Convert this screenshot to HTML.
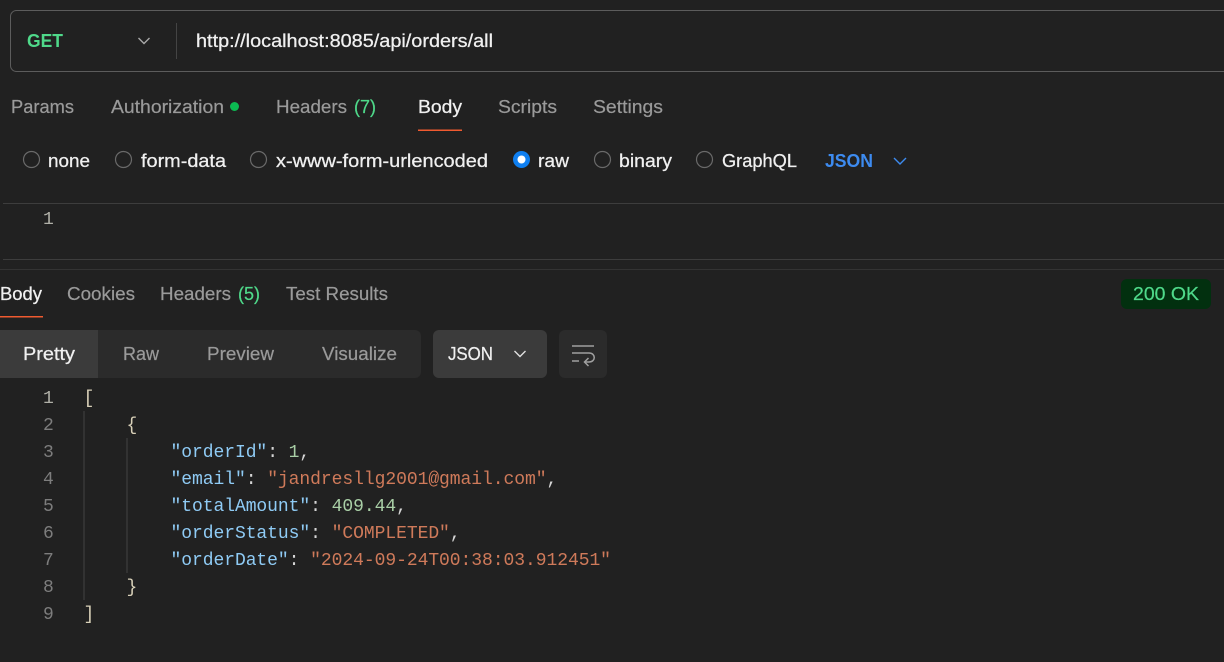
<!DOCTYPE html>
<html><head><meta charset="utf-8"><style>
html,body{margin:0;padding:0;background:#212121;width:1224px;height:662px;overflow:hidden}
svg{display:block}
text{font-family:"Liberation Sans",sans-serif;font-size:18px;white-space:pre}
.g{fill:#9a9a9a;stroke:#9a9a9a;stroke-width:.2}.w{fill:#f0f0f0;stroke:#f0f0f0;stroke-width:.25}.gr{fill:#4fd98a;stroke:#4fd98a;stroke-width:.2}
.m{font-family:"Liberation Mono",monospace;font-size:18px;letter-spacing:-.06px}
.n{fill:#7d7d7d}.l{fill:#b0b0a8}.k{fill:#8fcbf5}.s{fill:#cf7a5a}.d{fill:#a9cfa6}.p{fill:#d6d6d6}.b{fill:#d8d0b8}
</style></head><body>
<svg width="1224" height="662" viewBox="0 0 1224 662" xmlns="http://www.w3.org/2000/svg">
<rect width="1224" height="662" fill="#212121"/>
<rect x="10.5" y="10.5" width="1240" height="61" rx="6" fill="none" stroke="#5c5c5c"/>
<rect x="176" y="23" width="1" height="36" fill="#444"/>
<text x="27" y="47" font-weight="bold" class="gr" style="stroke-width:0" textLength="36" lengthAdjust="spacingAndGlyphs">GET</text>
<path d="M138.5 38 L144 43.5 L149.5 38" fill="none" stroke="#a8a8a8" stroke-width="1.4"/>
<text x="196" y="47" class="w" textLength="297" lengthAdjust="spacingAndGlyphs">http://localhost:8085/api/orders/all</text>

<text x="11" y="113" class="g" textLength="63" lengthAdjust="spacingAndGlyphs">Params</text>
<text x="111" y="113" class="g" textLength="113" lengthAdjust="spacingAndGlyphs">Authorization</text>
<circle cx="234.5" cy="106.5" r="4.5" fill="#0cbb52"/>
<text x="276" y="113" class="g" textLength="71" lengthAdjust="spacingAndGlyphs">Headers</text>
<text x="354" y="113" class="gr" textLength="22" lengthAdjust="spacingAndGlyphs">(7)</text>
<text x="418" y="113" class="w" textLength="44" lengthAdjust="spacingAndGlyphs">Body</text>
<rect x="418" y="129.5" width="44" height="1.5" fill="#f05a30"/>
<text x="498" y="113" class="g" textLength="59" lengthAdjust="spacingAndGlyphs">Scripts</text>
<text x="593" y="113" class="g" textLength="70" lengthAdjust="spacingAndGlyphs">Settings</text>

<g fill="none" stroke="#6a6a6a" stroke-width="1.2">
<circle cx="31.5" cy="159.5" r="8"/><circle cx="123.5" cy="159.5" r="8"/><circle cx="258.5" cy="159.5" r="8"/>
<circle cx="602.5" cy="159.5" r="8"/><circle cx="704.5" cy="159.5" r="8"/>
</g>
<circle cx="521.5" cy="159.5" r="8.5" fill="#0f7ff0"/><circle cx="521.5" cy="159.5" r="4" fill="#fff"/>
<text x="48" y="167" class="w" textLength="42" lengthAdjust="spacingAndGlyphs">none</text>
<text x="141" y="167" class="w" textLength="85" lengthAdjust="spacingAndGlyphs">form-data</text>
<text x="276" y="167" class="w" textLength="212" lengthAdjust="spacingAndGlyphs">x-www-form-urlencoded</text>
<text x="538" y="167" class="w" textLength="31" lengthAdjust="spacingAndGlyphs">raw</text>
<text x="619" y="167" class="w" textLength="53" lengthAdjust="spacingAndGlyphs">binary</text>
<text x="722" y="167" class="w" textLength="75" lengthAdjust="spacingAndGlyphs">GraphQL</text>
<text x="825" y="167" font-weight="bold" fill="#3d8bf0" textLength="48" lengthAdjust="spacingAndGlyphs">JSON</text>
<path d="M894 158 L900 164 L906 158" fill="none" stroke="#3d8bf0" stroke-width="1.4"/>

<rect x="3" y="203" width="1221" height="1" fill="#3d3d3d"/>
<text x="43" y="224" class="m l">1</text>
<rect x="3" y="259" width="1221" height="1" fill="#3d3d3d"/>
<rect x="0" y="269" width="1224" height="1" fill="#333"/>

<text x="0" y="300" class="w" textLength="42" lengthAdjust="spacingAndGlyphs">Body</text>
<rect x="0" y="316" width="43" height="1.5" fill="#f05a30"/>
<text x="67" y="300" class="g" textLength="68" lengthAdjust="spacingAndGlyphs">Cookies</text>
<text x="160" y="300" class="g" textLength="71" lengthAdjust="spacingAndGlyphs">Headers</text>
<text x="238" y="300" class="gr" textLength="22" lengthAdjust="spacingAndGlyphs">(5)</text>
<text x="286" y="300" class="g" textLength="102" lengthAdjust="spacingAndGlyphs">Test Results</text>
<rect x="1121" y="279" width="90" height="30" rx="6" fill="#02300f"/>
<text x="1133" y="300" class="gr" textLength="66" lengthAdjust="spacingAndGlyphs">200 OK</text>

<rect x="0" y="330" width="421" height="48" rx="6" fill="#2b2b2b"/>
<path d="M0 330 H98 V378 H0 Z" fill="#3b3b3b"/>
<text x="23" y="360" class="w" textLength="52" lengthAdjust="spacingAndGlyphs">Pretty</text>
<text x="123" y="360" class="g" textLength="36" lengthAdjust="spacingAndGlyphs">Raw</text>
<text x="207" y="360" class="g" textLength="67" lengthAdjust="spacingAndGlyphs">Preview</text>
<text x="322" y="360" class="g" textLength="75" lengthAdjust="spacingAndGlyphs">Visualize</text>
<rect x="433" y="330" width="114" height="48" rx="6" fill="#3b3b3b"/>
<text x="448" y="360" class="w" textLength="45" lengthAdjust="spacingAndGlyphs">JSON</text>
<path d="M514.5 351 L520 356.5 L525.5 351" fill="none" stroke="#e0e0e0" stroke-width="1.4"/>
<rect x="559" y="330" width="48" height="48" rx="6" fill="#2b2b2b"/>
<g fill="none" stroke="#a0a0a0" stroke-width="1.5">
<path d="M572 346 H594"/><path d="M572 353 H589 C596 353 596 362 589 362 H585"/><path d="M572 361 H579"/><path d="M588.5 358 L584.5 362 L588.5 366"/>
</g>

<rect x="83.5" y="411" width="1" height="189" fill="#444"/>
<rect x="126.5" y="438" width="1" height="135" fill="#444"/>
<text x="43" y="403" class="m l">1</text>
<text x="43" y="430" class="m n">2</text>
<text x="43" y="457" class="m n">3</text>
<text x="43" y="484" class="m n">4</text>
<text x="43" y="511" class="m n">5</text>
<text x="43" y="538" class="m n">6</text>
<text x="43" y="565" class="m n">7</text>
<text x="43" y="592" class="m n">8</text>
<text x="43" y="619" class="m n">9</text>
<text x="83.5" y="403" class="m b">[</text>
<text x="126.5" y="430" class="m b">{</text>
<text x="170.5" y="457" class="m"><tspan class="k">"orderId"</tspan><tspan class="p">: </tspan><tspan class="d">1</tspan><tspan class="p">,</tspan></text>
<text x="170.5" y="484" class="m"><tspan class="k">"email"</tspan><tspan class="p">: </tspan><tspan class="s">"jandresllg2001@gmail.com"</tspan><tspan class="p">,</tspan></text>
<text x="170.5" y="511" class="m"><tspan class="k">"totalAmount"</tspan><tspan class="p">: </tspan><tspan class="d">409.44</tspan><tspan class="p">,</tspan></text>
<text x="170.5" y="538" class="m"><tspan class="k">"orderStatus"</tspan><tspan class="p">: </tspan><tspan class="s">"COMPLETED"</tspan><tspan class="p">,</tspan></text>
<text x="170.5" y="565" class="m"><tspan class="k">"orderDate"</tspan><tspan class="p">: </tspan><tspan class="s">"2024-09-24T00:38:03.912451"</tspan></text>
<text x="126.5" y="592" class="m b">}</text>
<text x="83.5" y="619" class="m b">]</text>
</svg>
</body></html>
